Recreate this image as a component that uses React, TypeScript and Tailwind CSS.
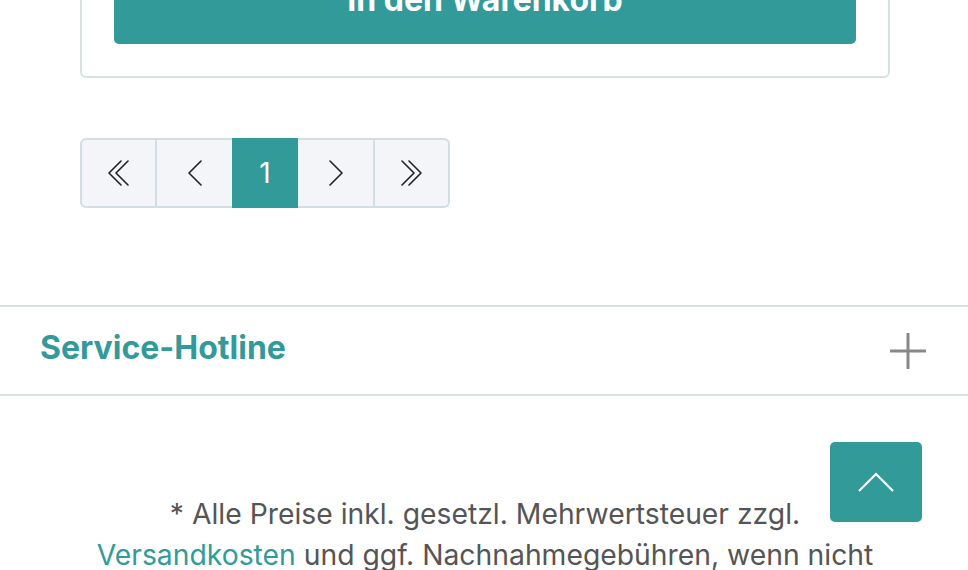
import React from "react";

const teal = "bg-[#339a9a]";

function Chevron({ dir, double }: { dir: "left" | "right"; double?: boolean }) {
  const w = double ? 22 : 14;
  const pts = (x: number) =>
    dir === "left" ? `${x + 12},1 ${x},13 ${x + 12},25` : `${x},1 ${x + 12},13 ${x},25`;
  return (
    <svg width={w} height={26} viewBox={`0 0 ${w} 26`} fill="none" stroke="#222" strokeWidth={1.6} strokeLinecap="round" strokeLinejoin="round">
      {double ? (
        <>
          <polyline points={pts(1)} />
          <polyline points={pts(8)} />
        </>
      ) : (
        <polyline points={pts(1)} />
      )}
    </svg>
  );
}

export default function App() {
  return (
    <div className="relative w-[968px] h-[570px] overflow-hidden bg-white" style={{ fontFamily: "Inter, 'Noto Sans', sans-serif" }}>
      {/* Card */}
      <div className="mx-[80px] mt-[-78px] w-[810px] rounded-md border-2 border-[#d7e3e3] p-8">
        <button className={`flex h-[88px] w-full items-center justify-center rounded-[5px] ${teal} text-[32px] font-bold text-white`}>
          In den Warenkorb
        </button>
      </div>

      {/* Pagination */}
      <div className="ml-[80px] mt-[60px] flex h-[70px]">
        <div className="flex w-[77px] items-center justify-center rounded-l-md border-2 border-[#d3dde4] bg-[#f4f5f8]">
          <Chevron dir="left" double />
        </div>
        <div className="flex w-[75px] items-center justify-center border-y-2 border-[#d3dde4] bg-[#f4f5f8]">
          <Chevron dir="left" />
        </div>
        <div className={`flex w-[66px] items-center justify-center ${teal} text-[28px] font-normal text-white`}>1</div>
        <div className="flex w-[77px] items-center justify-center border-y-2 border-r-2 border-[#d3dde4] bg-[#f4f5f8]">
          <Chevron dir="right" />
        </div>
        <div className="flex w-[75px] items-center justify-center rounded-r-md border-y-2 border-r-2 border-[#d3dde4] bg-[#f4f5f8]">
          <Chevron dir="right" double />
        </div>
      </div>

      {/* Service-Hotline */}
      <div className="mt-[97px] flex h-[91px] items-center justify-between border-y-2 border-[#d7e3e3] pl-[40px] pr-[42px]">
        <span className="pb-[6px] text-[32px] font-bold text-[#339a9a]">Service-Hotline</span>
        <svg width="36" height="36" viewBox="0 0 36 36" stroke="#888" strokeWidth="3">
          <line x1="0" y1="18" x2="36" y2="18" />
          <line x1="18" y1="0" x2="18" y2="36" />
        </svg>
      </div>

      {/* Footer text */}
      <div className="ml-[75px] mt-[98px] w-[820px] text-center text-[28.3px] leading-[41px] text-[#555]">
        * Alle Preise inkl. gesetzl. Mehrwertsteuer zzgl.
        <br />
        <span className="text-[#339a9a]">Versandkosten</span> und ggf. Nachnahmegebühren, wenn nicht
      </div>

      {/* Scroll to top */}
      <button className={`absolute left-[830px] top-[442px] flex h-[80px] w-[92px] items-center justify-center rounded-[5px] ${teal}`}>
        <svg width="36" height="20" viewBox="0 0 36 20" fill="none" stroke="white" strokeWidth="2.2">
          <polyline points="1,19 18,2 35,19" />
        </svg>
      </button>
    </div>
  );
}
